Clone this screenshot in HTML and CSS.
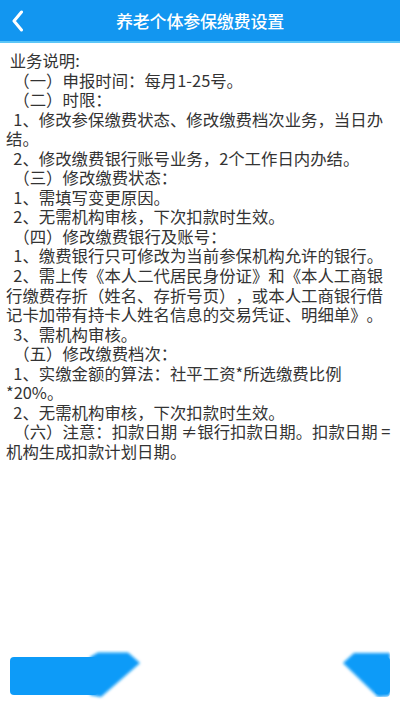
FILE: index.html
```html
<!DOCTYPE html>
<html lang="zh-CN">
<head>
<meta charset="utf-8">
<title>养老个体参保缴费设置</title>
<link rel="stylesheet" href="styles.css">
</head>
<body>
<div class="page">
  <header class="topbar">
    <a class="back" href="#" aria-label="返回">
      <svg width="14" height="22" viewBox="0 0 14 22"><path d="M10.5 2 L3 11 L10.5 20" fill="none" stroke="#fff" stroke-width="3" stroke-linecap="round" stroke-linejoin="round"/></svg>
    </a>
    <h1 class="title">养老个体参保缴费设置</h1>
  </header>
  <main class="content">
    <p class="line"> 业务说明:</p>
    <p class="line">  （一）申报时间：每月1-25号。</p>
    <p class="line">  （二）时限：</p>
    <p class="line">  1、修改参保缴费状态、修改缴费档次业务，当日办结。</p>
    <p class="line">  2、修改缴费银行账号业务，2个工作日内办结。</p>
    <p class="line">  （三）修改缴费状态：</p>
    <p class="line">  1、需填写变更原因。</p>
    <p class="line">  2、无需机构审核，下次扣款时生效。</p>
    <p class="line">  （四）修改缴费银行及账号：</p>
    <p class="line">  1、缴费银行只可修改为当前参保机构允许的银行。</p>
    <p class="line">  2、需上传《本人二代居民身份证》和《本人工商银行缴费存折（姓名、存折号页），或本人工商银行借记卡加带有持卡人姓名信息的交易凭证、明细单》。</p>
    <p class="line">  3、需机构审核。</p>
    <p class="line">  （五）修改缴费档次：</p>
    <p class="line">  1、实缴金额的算法：社平工资*所选缴费比例*20%。</p>
    <p class="line">  2、无需机构审核，下次扣款时生效。</p>
    <p class="line">  （六）注意：扣款日期 ≠银行扣款日期。扣款日期 =机构生成扣款计划日期。</p>
  </main>
  <footer class="footer">
    <svg class="tab tab-left" width="135" height="50" viewBox="0 0 135 50">
      <defs><filter id="bl" x="-20%" y="-30%" width="140%" height="160%"><feGaussianBlur stdDeviation="1.7"/></filter></defs>
      <polygon points="80,7 88,2.5 118,2.5 130,13 91,47 80,45" fill="#0d9bf8" filter="url(#bl)"/>
      <rect x="0" y="7" width="88" height="38" rx="4" fill="#0d9bf8"/>
    </svg>
    <svg class="tab tab-right" width="55" height="50" viewBox="0 0 55 50">
      <defs>
        <filter id="br" x="-30%" y="-30%" width="160%" height="160%"><feGaussianBlur stdDeviation="1.7"/></filter>
        <clipPath id="cr"><rect x="-20" y="0" width="75" height="47" rx="4"/></clipPath>
      </defs>
      <g clip-path="url(#cr)">
        <polygon points="8,13 19,3 55,3 55,46 43,47" fill="#0d9bf8" filter="url(#br)"/>
      </g>
      <rect x="40" y="7" width="15" height="37" rx="4" fill="#0d9bf8"/>
    </svg>
  </footer>
</div>
</body>
</html>
```
FILE: styles.css
```css
* { box-sizing: border-box; }
html, body { margin: 0; padding: 0; background: #fff; }
body {
  font-family: "Noto Sans CJK SC", "Noto Sans", sans-serif;
  color: #333;
}
.page {
  width: 400px;
  height: 710px;
  display: flex;
  flex-direction: column;
  overflow: hidden;
}
.topbar {
  height: 43px;
  background: #1296f0;
  border-bottom: 2px solid #5cc6f7;
  display: flex;
  align-items: center;
  justify-content: center;
  position: relative;
  flex: none;
}
.back {
  position: absolute;
  left: 11px;
  top: 10px;
  display: block;
  width: 14px;
  height: 22px;
}
.back svg { display: block; }
.title {
  margin: 0;
  font-size: 17px;
  font-weight: 500;
  color: #fff;
  letter-spacing: -0.2px;
}
.content {
  flex: 1;
  padding: 8px 8px 0 6px;
  font-size: 16.4px;
  line-height: 19.55px;
  text-spacing-trim: space-all;
}
.line {
  margin: 0;
  white-space: pre-wrap;
}
.footer {
  flex: none;
  height: 50px;
  margin-bottom: 10px;
  padding: 0 10px;
  display: flex;
  justify-content: space-between;
  align-items: flex-start;
}
.tab { display: block; }
```
